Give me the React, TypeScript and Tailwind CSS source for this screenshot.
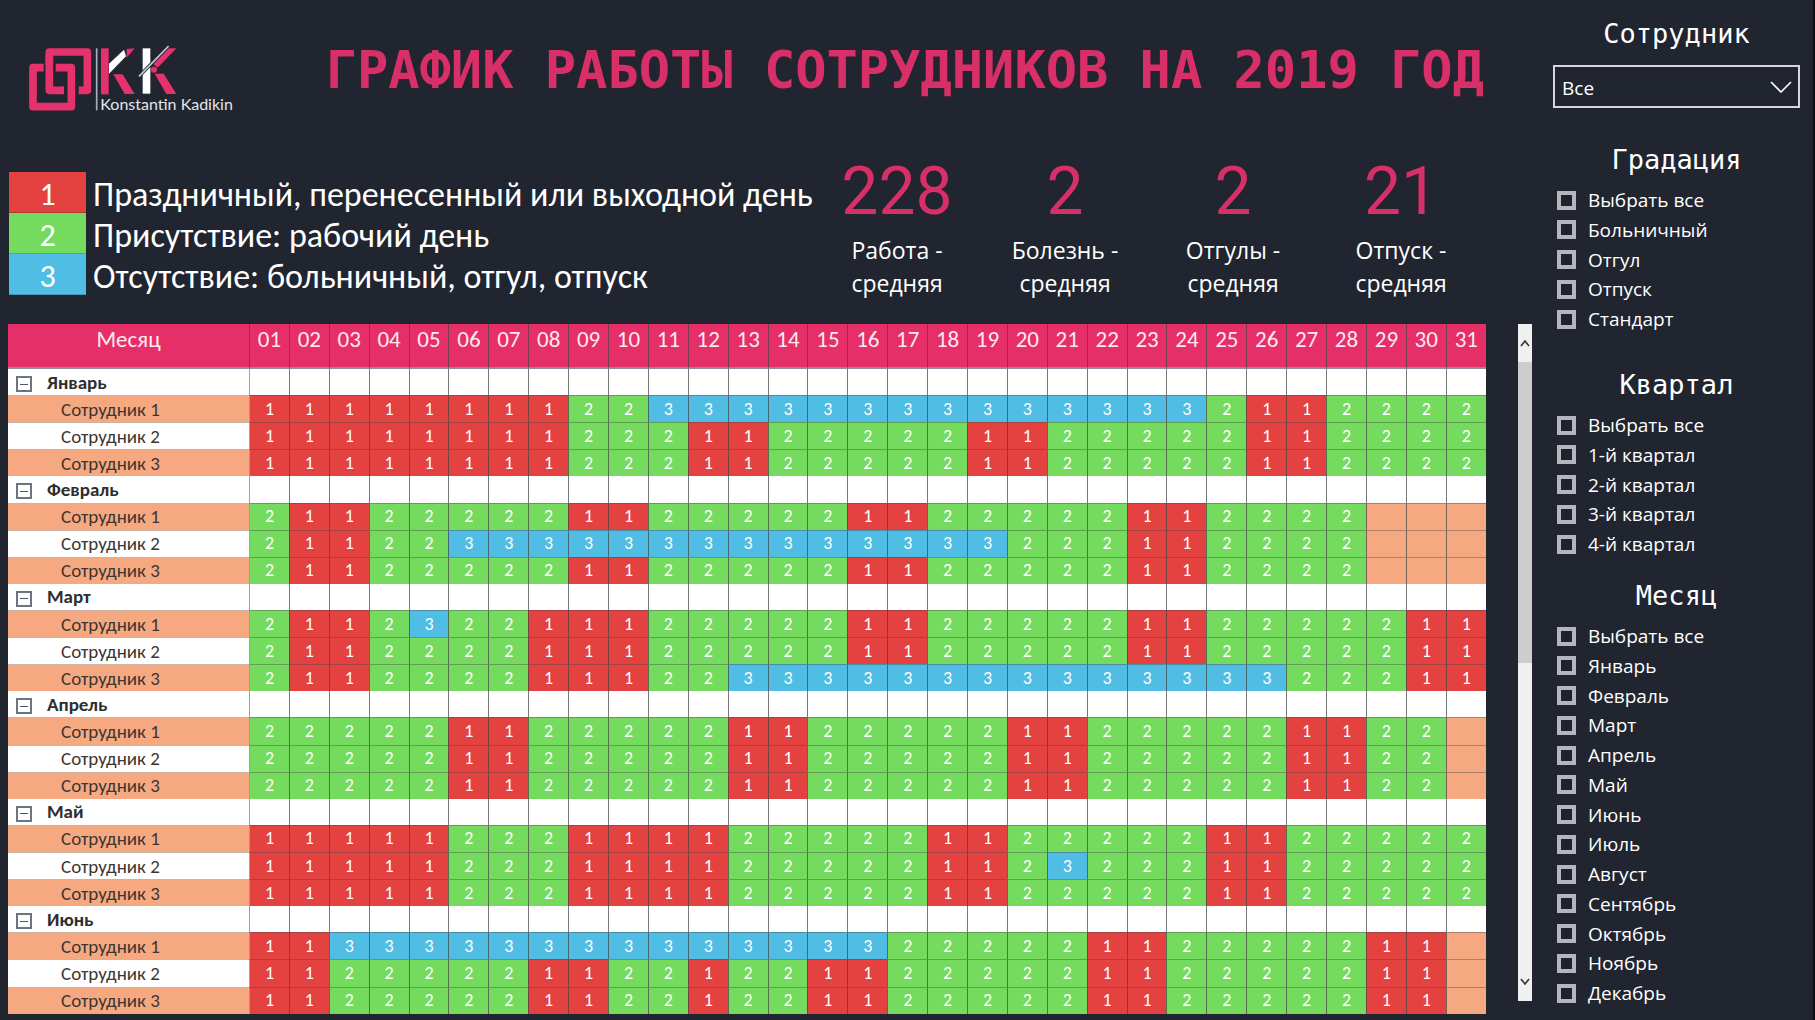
import React from 'react';

type Employee = { name: string; days: number[] };
type Month = { name: string; employees: Employee[] };

const DAYS = Array.from({ length: 31 }, (_, i) => i + 1);

/** Expands "1x8 2x2" into eight ones followed by two twos. */
function expand(runs: string): number[] {
  return runs.split(' ').flatMap((run) => {
    const [value, count] = run.split('x').map(Number);
    return Array<number>(count).fill(value);
  });
}

function month(name: string, ...schedules: string[]): Month {
  return {
    name,
    employees: schedules.map((runs, i) => ({ name: `Сотрудник ${i + 1}`, days: expand(runs) })),
  };
}

const JAN = '1x8 2x3 1x2 2x5 1x2 2x5 1x2 2x4';
const FEB = '2x1 1x2 2x5 1x2 2x5 1x2 2x5 1x2 2x4';
const APR = '2x5 1x2 2x5 1x2 2x5 1x2 2x5 1x2 2x2';
const MAY = '1x5 2x3 1x4 2x5 1x2 2x5 1x2 2x5';
const JUN = '1x2 2x5 1x2 2x2 1x1 2x2 1x2 2x5 1x2 2x5 1x2';

const MONTHS: Month[] = [
  month('Январь', '1x8 2x2 3x14 2x1 1x2 2x4', JAN, JAN),
  month('Февраль', FEB, '2x1 1x2 2x2 3x14 2x3 1x2 2x4', FEB),
  month(
    'Март',
    '2x1 1x2 2x1 3x1 2x2 1x3 2x5 1x2 2x5 1x2 2x5 1x2',
    '2x1 1x2 2x4 1x3 2x5 1x2 2x5 1x2 2x5 1x2',
    '2x1 1x2 2x4 1x3 2x2 3x14 2x3 1x2',
  ),
  month('Апрель', APR, APR, APR),
  month('Май', MAY, '1x5 2x3 1x4 2x5 1x2 2x1 3x1 2x3 1x2 2x5', MAY),
  month('Июнь', '1x2 3x14 2x5 1x2 2x5 1x2', JUN, JUN),
];

const DAY_COLORS: Record<number, string> = {
  1: 'bg-[#e34240]',
  2: 'bg-[#74db5f]',
  3: 'bg-[#50bde4]',
};

const LEGEND = [
  { value: 1, text: 'Праздничный, перенесенный или выходной день' },
  { value: 2, text: 'Присутствие: рабочий день' },
  { value: 3, text: 'Отсутствие: больничный, отгул, отпуск' },
];

const KPIS = [
  { value: '228', label: 'Работа -' },
  { value: '2', label: 'Болезнь -' },
  { value: '2', label: 'Отгулы -' },
  { value: '21', label: 'Отпуск -' },
];

const GRADES = ['Выбрать все', 'Больничный', 'Отгул', 'Отпуск', 'Стандарт'];
const QUARTERS = ['Выбрать все', '1-й квартал', '2-й квартал', '3-й квартал', '4-й квартал'];
const MONTH_OPTIONS = [
  'Выбрать все', 'Январь', 'Февраль', 'Март', 'Апрель', 'Май', 'Июнь',
  'Июль', 'Август', 'Сентябрь', 'Октябрь', 'Ноябрь', 'Декабрь',
];

function Logo() {
  return (
    <svg viewBox="0 0 660 255" className="h-[85px] w-[220px] shrink-0" role="img" aria-label="Konstantin Kadikin">
      <g fill="none" stroke="#e5326c" strokeWidth="23" strokeLinejoin="round">
        <path d="M176 166H202V51H88V166H132" />
        <path d="M105 98H154V215" stroke="#202530" strokeWidth="35" />
        <path d="M71 98H39V215H154V98H107" />
        <path d="M88 90V166H126" stroke="#202530" strokeWidth="31" />
        <path d="M88 60V166H132" />
      </g>
      <path d="M230 40V226" stroke="#aab0ba" strokeWidth="5" />
      <g fill="#e5326c">
        <path d="M243 40h23v138h-23z" />
        <path d="M320 42l24-2-24 28z" />
        <path d="M280 118h28l36 59h-30z" />
        <path d="M440 40h29l-56 58-14-12z" />
        <path d="M404 116h27l38 61h-30z" />
        <circle cx="402" cy="104" r="9" />
      </g>
      <path d="M267 86L312 44l6 20-51 52z" fill="#fff" />
      <path d="M368 40h23v136h-23z" fill="#fff" />
      <path d="M357 124L446 33" stroke="#202530" strokeWidth="10" />
      <path d="M357 124L446 33" stroke="#c9ccd2" strokeWidth="5" />
      <text x="241" y="225" fontSize="48" fill="#e3e6ec" fontFamily="Lato, sans-serif">
        Konstantin Kadikin
      </text>
    </svg>
  );
}

function Legend() {
  return (
    <ul className="flex flex-col font-['Carlito','Lato',sans-serif] text-[34px] leading-[45px]">
      {LEGEND.map(({ value, text }) => (
        <li key={value} className="flex h-[41px] items-start gap-[7px]">
          <span className={`h-[41px] w-[77px] border-b border-black/20 text-center text-[32px] ${DAY_COLORS[value]}`}>
            {value}
          </span>
          <span className="whitespace-nowrap">{text}</span>
        </li>
      ))}
    </ul>
  );
}

function Kpis() {
  return (
    <dl className="grid w-[672px] shrink-0 grid-cols-4 text-center font-['Open_Sans','Noto_Sans',sans-serif]">
      {KPIS.map(({ value, label }) => (
        <div key={label} className="flex flex-col-reverse justify-end">
          <dt className="text-[23px] leading-[33px]">
            {label}
            <br />
            средняя
          </dt>
          <dd className="mb-[5px] font-['Roboto',sans-serif] text-[66px] leading-[74px] text-[#d82f68]">{value}</dd>
        </div>
      ))}
    </dl>
  );
}

function MonthRows({ month: { name, employees } }: { month: Month }) {
  return (
    <>
      <tr className="bg-white text-[#2e2e2e]">
        <th scope="rowgroup" className="p-0 text-[19px] font-bold">
          <span className="flex items-center gap-[15px] pl-2">
            <button
              type="button"
              aria-label={`Свернуть: ${name}`}
              className="mt-1 flex size-4 items-center justify-center border-2 border-[#6b7480] bg-white"
            >
              <span className="h-px w-2 bg-[#4b5563]" />
            </button>
            {name}
          </span>
        </th>
        {DAYS.map((day) => (
          <td key={day} className={`border-l p-0 ${day === 1 ? 'border-[#6fb3b3]' : 'border-[#777777]'}`} />
        ))}
      </tr>
      {employees.map((employee, i) => (
        <tr key={employee.name}>
          <th
            scope="row"
            className={`border-t border-[#c9b3a4] p-0 pl-[53px] text-left text-[19px] font-normal text-[#3c3532] ${i === 1 ? 'bg-white' : 'bg-[#f6a981]'}`}
          >
            {employee.name}
          </th>
          {DAYS.map((day) => (
            <td
              key={day}
              className={`border-t border-l border-t-[#444444]/40 p-0 text-center text-white ${day === 1 ? 'border-l-[#6fb3b3]' : 'border-l-[#444444]/70'} ${DAY_COLORS[employee.days[day - 1]] ?? 'bg-[#f6a981]'}`}
            >
              {employee.days[day - 1]}
            </td>
          ))}
        </tr>
      ))}
    </>
  );
}

function Schedule() {
  return (
    <table className="h-full min-w-0 flex-1 table-fixed border-separate border-spacing-0 font-['Carlito','Lato',sans-serif] text-[18px] leading-[25px]">
      <colgroup>
        <col className="w-[241px]" />
        {DAYS.map((day) => (
          <col key={day} />
        ))}
      </colgroup>
      <thead>
        <tr className="h-[45px] bg-[#e62e69] align-top text-[23px] leading-[31px] text-[#fbe9f0]">
          <th scope="col" className="border-b-2 border-[#8f8f9b] p-0 font-normal">Месяц</th>
          {DAYS.map((day) => (
            <th key={day} scope="col" className="border-b-2 border-l border-b-[#8f8f9b] border-l-[#444444]/70 p-0 font-normal">
              {String(day).padStart(2, '0')}
            </th>
          ))}
        </tr>
      </thead>
      <tbody>
        {MONTHS.map((m) => (
          <MonthRows key={m.name} month={m} />
        ))}
      </tbody>
    </table>
  );
}

function Chevron({ d }: { d: string }) {
  return (
    <svg viewBox="0 0 10 10" className="size-[10px]" fill="none" stroke="#333" strokeWidth="1.6" aria-hidden="true">
      <path d={d} />
    </svg>
  );
}

function ScrollBar() {
  return (
    <div className="mb-[13px] flex w-[14px] flex-col bg-[#f0f0f0]">
      <button type="button" aria-label="Вверх" className="flex h-[38px] items-center justify-center">
        <Chevron d="M1 8L5 3L9 8" />
      </button>
      <div className="flex-1">
        <div className="h-1/2 bg-[#cdcdcd]" />
      </div>
      <button type="button" aria-label="Вниз" className="flex h-[38px] items-center justify-center">
        <Chevron d="M1 2L5 7L9 2" />
      </button>
    </div>
  );
}

function Heading({ children }: { children: React.ReactNode }) {
  return (
    <h2 className="text-center font-['DejaVu_Sans_Mono',monospace] text-[27px] leading-[36px]">{children}</h2>
  );
}

function CheckList({ title, options, className }: { title: string; options: string[]; className: string }) {
  return (
    <section className={`flex flex-col ${className}`}>
      <Heading>{title}</Heading>
      <ul className="mt-[9px] flex flex-1 flex-col justify-between">
        {options.map((option) => (
          <li key={option}>
            <label className="flex items-center gap-3 pl-1 text-[19px] leading-[26px]">
              <input
                type="checkbox"
                className="size-[19px] shrink-0 appearance-none border-4 border-[#b4b6bb] bg-[#1d222b] checked:bg-[#c3c5ca]"
              />
              {option}
            </label>
          </li>
        ))}
      </ul>
    </section>
  );
}

function Filters() {
  return (
    <aside className="flex w-[275px] shrink-0 flex-col border-r-2 border-[#0d1015] pt-4 pr-[13px] pb-[14px] pl-[13px] font-['Open_Sans','Noto_Sans',sans-serif]">
      <Heading>
        <label htmlFor="employee">Сотрудник</label>
      </Heading>
      <div className="relative mt-[13px]">
        <select
          id="employee"
          className="h-[43px] w-full appearance-none border-2 border-[#d5d7db] bg-transparent px-[7px] pt-1 text-[19px] text-white"
        >
          <option>Все</option>
        </select>
        <svg
          viewBox="0 0 22 12"
          className="pointer-events-none absolute top-4 right-2 h-3 w-[22px]"
          fill="none"
          stroke="#fff"
          strokeWidth="1.6"
          aria-hidden="true"
        >
          <path d="M1 1L11 11L21 1" />
        </svg>
      </div>
      <CheckList title="Градация" options={GRADES} className="mt-[34px] min-h-[190px]" />
      <CheckList title="Квартал" options={QUARTERS} className="mt-[35px] min-h-[190px]" />
      <CheckList title="Месяц" options={MONTH_OPTIONS} className="mt-[21px] flex-1" />
    </aside>
  );
}

export default function App() {
  return (
    <div className="flex h-screen bg-[#202530] text-white">
      <main className="flex min-w-0 flex-1 flex-col pb-[6px] pl-2">
        <header className="flex h-[155px] items-start pt-[35px] pl-3">
          <Logo />
          <h1 className="flex-1 pr-[56px] text-right font-['DejaVu_Sans_Mono',monospace] text-[52px] leading-[70px] font-bold whitespace-nowrap text-[#d82f68]">
            ГРАФИК РАБОТЫ СОТРУДНИКОВ НА 2019 ГОД
          </h1>
        </header>
        <div className="flex h-[169px] justify-between pr-[55px]">
          <div className="pt-[17px] pl-px">
            <Legend />
          </div>
          <Kpis />
        </div>
        <div className="flex min-h-0 flex-1 gap-8 pr-2">
          <Schedule />
          <ScrollBar />
        </div>
      </main>
      <Filters />
    </div>
  );
}
